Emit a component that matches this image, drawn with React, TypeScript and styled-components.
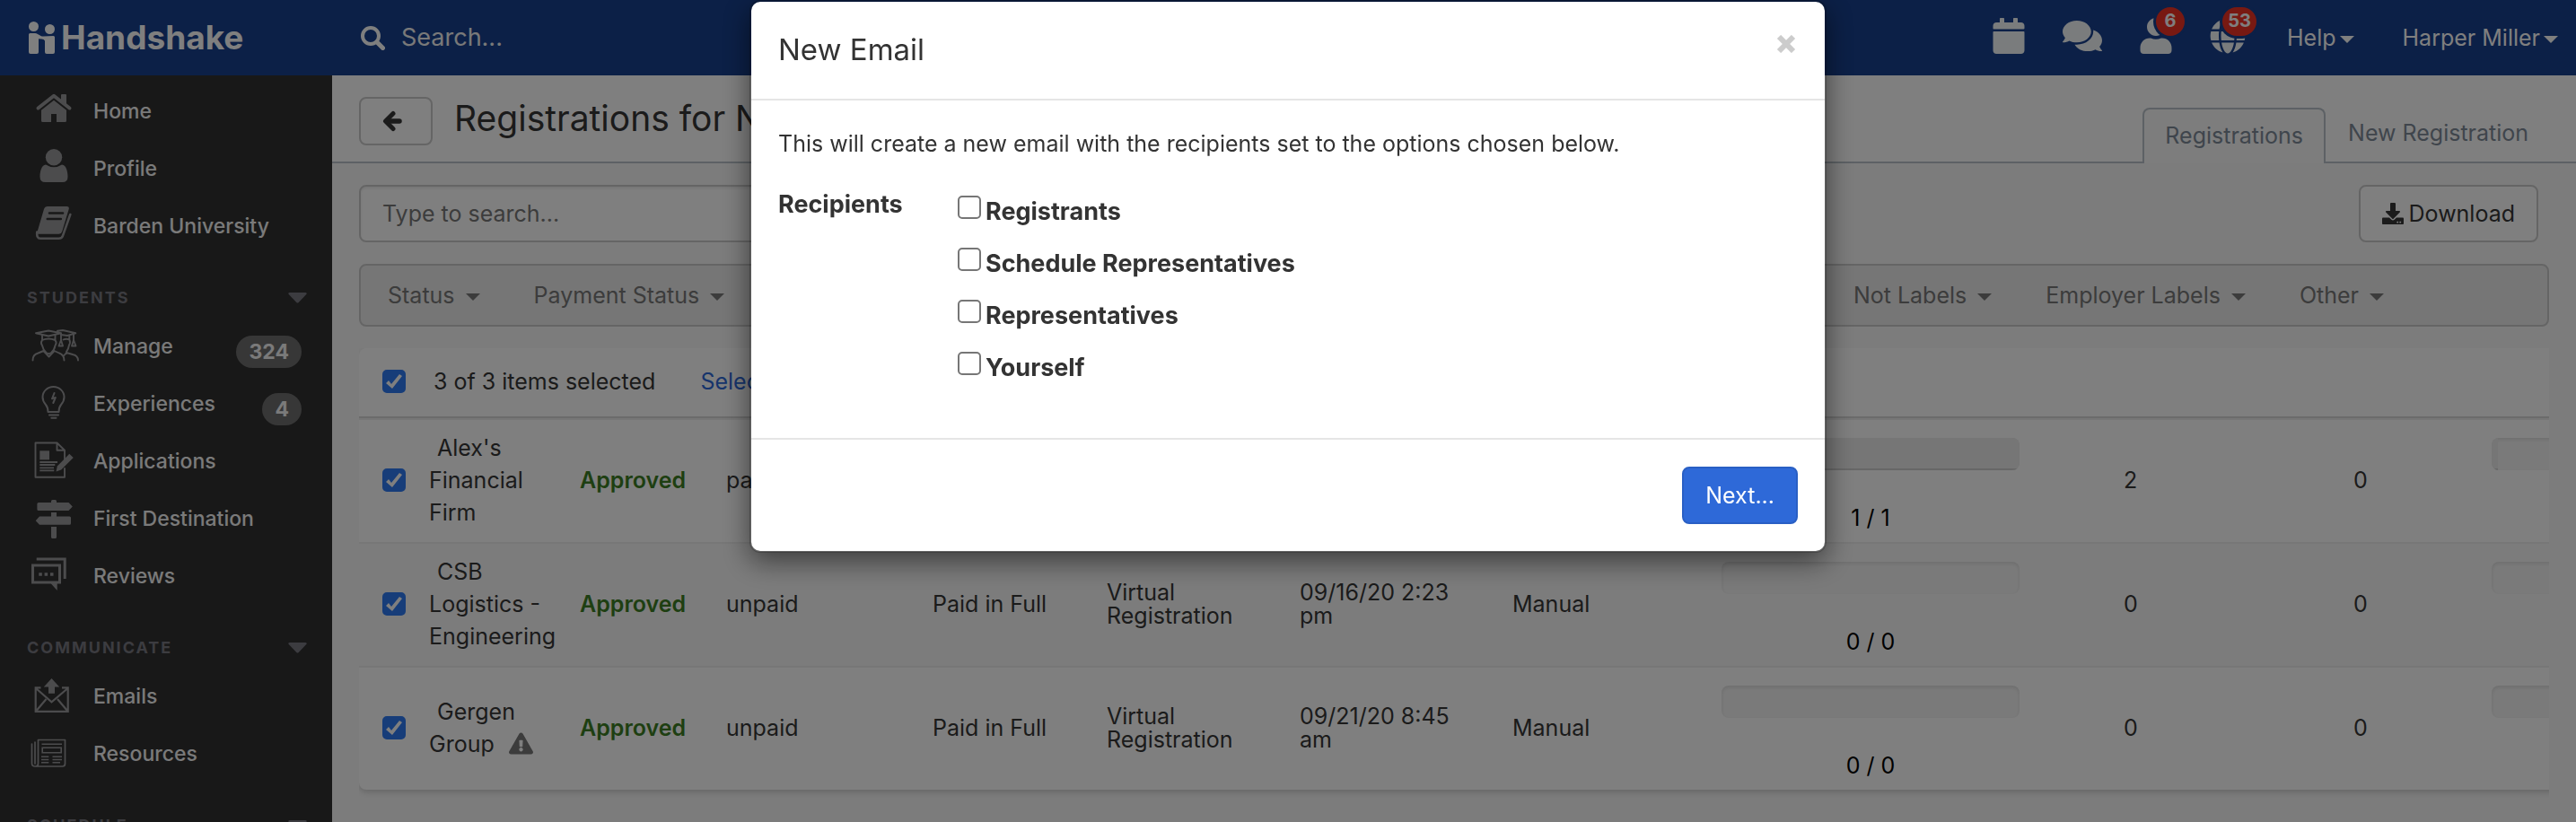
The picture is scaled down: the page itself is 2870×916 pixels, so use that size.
import React from 'react';
import styled, { createGlobalStyle, css } from 'styled-components';
import { FaCalendar, FaComments, FaDownload, FaExclamationTriangle, FaGlobe, FaUser } from 'react-icons/fa';

const colors = {
  navy: '#18408e',
  rail: '#303030',
  railText: '#f4f4f4',
  railIcon: '#98989b',
  railHeading: '#787881',
  text: '#363636',
  muted: '#787878',
  border: '#cbcbcb',
  rule: '#bac3ca',
  tab: '#7e8b99',
  blue: '#2e69d8',
  green: '#3c7e24',
  red: '#f03224',
};

const Global = createGlobalStyle`
  *, *::before, *::after { box-sizing: border-box; }
  body {
    margin: 0;
    overflow: hidden;
    font-family: Inter, "Liberation Sans", sans-serif;
    font-size: 25px;
    line-height: 36px;
    color: ${colors.text};
  }
  button, input { font: inherit; color: inherit; margin: 0; }
  button { cursor: pointer; }
  a { text-decoration: none; color: inherit; }
`;

/* ---------- shell ---------- */

const Shell = styled.div`
  display: flex;
  flex-direction: column;
  height: 100vh;
  overflow: hidden;
`;

const Body = styled.div`
  display: flex;
  flex: 1;
  min-height: 0;
`;

const Main = styled.main`
  flex: 1;
  min-width: 0;
  background: #f8f8f8;
`;

/* ---------- top bar ---------- */

const TopBar = styled.header`
  display: flex;
  align-items: center;
  flex: none;
  height: 84px;
  padding: 0 20px 0 32px;
  background: ${colors.navy};
  color: #fff;
`;

const Brand = styled.a`
  display: flex;
  align-items: center;
  gap: 6px;
  width: 370px;
  font-size: 37px;
  font-weight: 700;
  line-height: 48px;
`;

const BrandMark = styled.svg`
  width: 30px;
  height: 36px;
`;

const GlobalSearch = styled.label`
  display: flex;
  align-items: center;
  flex: 1;
  gap: 18px;
`;

const GlobalSearchInput = styled.input`
  flex: 1;
  min-width: 0;
  border: 0;
  padding: 0;
  background: transparent;
  font-size: 27px;
  &::placeholder { color: #f2f2f2; opacity: 1; }
`;

const TopActions = styled.nav`
  display: flex;
  align-items: center;
`;

const TopIcons = styled.div`
  display: flex;
  align-items: center;
  gap: 40px;
  margin-right: 46px;
  padding-bottom: 4px;
`;

const IconButton = styled.button`
  position: relative;
  display: flex;
  align-items: center;
  justify-content: center;
  height: 44px;
  padding: 0;
  border: 0;
  background: none;
  color: #f4f8fa;
`;

const Counter = styled.span`
  position: absolute;
  top: -10px;
  right: -12px;
  min-width: 32px;
  height: 32px;
  padding: 0 6px;
  border-radius: 16px;
  background: ${colors.red};
  box-shadow: 0 0 0 3px ${colors.navy};
  color: #fff;
  font-size: 20px;
  font-weight: 700;
  line-height: 30px;
  text-align: center;
`;

const TopMenus = styled.div`
  display: flex;
  gap: 54px;
`;

const TopMenu = styled.button`
  display: flex;
  align-items: center;
  gap: 4px;
  padding: 0;
  border: 0;
  background: none;
  color: #fff;
`;

const Caret = styled.span`
  border: 8px solid transparent;
  border-top-color: currentColor;
  border-bottom: 0;
  margin-top: 4px;
`;

/* ---------- side bar ---------- */

const Sidebar = styled.nav`
  flex: none;
  width: 370px;
  padding-top: 8px;
  overflow: hidden;
  background: ${colors.rail};
  color: ${colors.railText};
`;

const NavLink = styled.a`
  display: flex;
  align-items: center;
  gap: 16px;
  height: 64px;
  padding: 0 34px 0 32px;
  font-size: 23px;
  font-weight: 500;
`;

const NavIcon = styled.svg`
  flex: none;
  width: 56px;
  height: 48px;
  color: ${colors.railIcon};
  fill: none;
  stroke: none;
`;

const NavBadge = styled.span`
  margin: 12px 0 0 auto;
  padding: 0 14px;
  border-radius: 18px;
  background: #6e6e6e;
  font-weight: 700;
`;

const NavHeading = styled.button`
  display: flex;
  align-items: center;
  justify-content: space-between;
  width: 100%;
  height: 70px;
  padding: 26px 28px 0 30px;
  border: 0;
  background: none;
  color: ${colors.railHeading};
  font-size: 18px;
  font-weight: 700;
  letter-spacing: 2px;
  text-transform: uppercase;
`;

/* ---------- page header ---------- */

const PageHeader = styled.div`
  display: flex;
  align-items: flex-end;
  justify-content: space-between;
  height: 98px;
  padding: 0 28px 0 30px;
  border-bottom: 2px solid ${colors.rule};
  background: #fff;
`;

const TitleGroup = styled.div`
  display: flex;
  align-items: flex-start;
  gap: 24px;
  height: 72px;
`;

const outlined = css`
  border: 2px solid ${colors.border};
  border-radius: 8px;
  background: #fff;
`;

const BackButton = styled.button`
  ${outlined}
  display: flex;
  align-items: center;
  justify-content: center;
  width: 82px;
  height: 54px;
  padding: 0 8px 0 0;
`;

const Title = styled.h1`
  margin: 0;
  font-size: 39px;
  font-weight: 400;
  line-height: 48px;
`;

const Tabs = styled.div`
  display: flex;
  align-items: flex-end;
`;

const Tab = styled.a<{ $active?: boolean }>`
  height: ${(p) => (p.$active ? 62 : 60)}px;
  margin-bottom: ${(p) => (p.$active ? -2 : 0)}px;
  padding: ${(p) => (p.$active ? '11px 23px' : '8px 23px')};
  border: 2px solid ${(p) => (p.$active ? colors.rule : 'transparent')};
  border-bottom: 0;
  border-radius: 8px 8px 0 0;
  background: ${(p) => (p.$active ? '#fafafa' : 'transparent')};
  color: ${colors.tab};
`;

/* ---------- toolbar ---------- */

const Content = styled.div`
  display: flex;
  flex-direction: column;
  gap: 24px;
  padding: 24px 30px;
`;

const Toolbar = styled.div`
  display: flex;
  justify-content: space-between;
  padding-right: 12px;
`;

const SearchBox = styled.input`
  ${outlined}
  width: 50%;
  height: 64px;
  padding: 0 24px;
  box-shadow: inset 0 2px 3px rgba(0, 0, 0, 0.08);
  &::placeholder { color: ${colors.muted}; opacity: 1; }
`;

const DownloadButton = styled.button`
  ${outlined}
  display: flex;
  align-items: center;
  gap: 6px;
  height: 64px;
  padding: 0 24px;
`;

const FilterBar = styled.div`
  display: flex;
  justify-content: space-between;
  height: 70px;
  padding: 0 182px 0 30px;
  border: 2px solid ${colors.border};
  border-radius: 8px;
  background: #ececec;
`;

const FilterGroup = styled.div`
  display: flex;
  gap: 60px;
`;

const Filter = styled.button`
  display: flex;
  align-items: center;
  gap: 12px;
  padding: 0;
  border: 0;
  background: none;
  color: ${colors.muted};
`;

/* ---------- table ---------- */

const TableScroll = styled.div`
  padding-bottom: 16px;
  overflow-x: auto;
  overflow-y: hidden;
  scrollbar-width: none;
`;

const Table = styled.table`
  width: 2824px;
  table-layout: fixed;
  border-collapse: separate;
  border-spacing: 0;
  border-radius: 8px;
  background: #fff;
  box-shadow: 0 3px 6px rgba(0, 0, 0, 0.16);
`;

const Col = styled.col<{ $w: number }>`
  width: ${(p) => p.$w}px;
`;

const HeadCell = styled.th`
  height: 78px;
  padding: 0 0 2px 5px;
  border-bottom: 2px solid #d6d6d6;
  font-weight: 400;
  text-align: left;
`;

const Row = styled.tr<{ $shade: boolean }>`
  background: ${(p) => (p.$shade ? '#f9f9f9' : 'transparent')};
`;

const Cell = styled.td<{ $pad?: number }>`
  height: 138px;
  padding: 0 ${(p) => p.$pad ?? 22}px 2px 0;
  border-top: 2px solid #efefef;
  line-height: 26px;
  vertical-align: middle;
`;

const checkCell = css`
  padding: 0 0 2px 26px;
`;
const HeadCheckCell = styled(HeadCell)`${checkCell}`;
const CheckCell = styled(Cell)`${checkCell}`;

const MeterCell = styled(Cell)`
  padding: 20px 116px 0 0;
  vertical-align: top;
`;

const Company = styled.a`
  display: block;
  line-height: 36px;
  text-indent: 9px;
`;

const WarnIcon = styled(FaExclamationTriangle)`
  margin-left: 16px;
  color: ${colors.muted};
  vertical-align: -4px;
`;

const Approved = styled.strong`
  color: ${colors.green};
  font-weight: 600;
`;

const SelectLink = styled.a`
  margin-left: 50px;
  color: ${colors.blue};
`;

const Meter = styled.div`
  height: 36px;
  margin-bottom: 40px;
  overflow: hidden;
  border-radius: 8px;
  background: #f5f5f5;
  box-shadow: inset 0 2px 4px rgba(0, 0, 0, 0.1);
`;

const MeterFill = styled.div`
  height: 100%;
  background: #ececec;
  box-shadow: inset 0 -2px 0 #cfcfcf;
`;

const MeterText = styled.div`
  color: #000;
  text-align: center;
`;

const Check = styled.input.attrs({ type: 'checkbox' })`
  appearance: none;
  display: block;
  position: relative;
  flex: none;
  width: 26px;
  height: 26px;
  border: 2px solid #767676;
  border-radius: 5px;
  background: #fff;
  &:checked {
    border-color: #2e7af2;
    background: #2e7af2;
  }
  &:checked::after {
    content: '';
    position: absolute;
    inset: -2px;
    background: #fff;
    clip-path: polygon(4px 15px, 7px 12px, 10px 16px, 19px 5px, 22px 7px, 11px 21px);
  }
`;

/* ---------- dialog ---------- */

const Backdrop = styled.div`
  position: fixed;
  inset: 0;
  background: rgba(0, 0, 0, 0.5);
`;

const Dialog = styled.section`
  width: 1200px;
  max-width: 100%;
  margin: 0 auto;
  border: 2px solid rgba(0, 0, 0, 0.2);
  border-radius: 12px;
  background: #fff;
  background-clip: padding-box;
  box-shadow: 0 10px 30px rgba(0, 0, 0, 0.5);
  color: #333;
`;

const DialogHeader = styled.div`
  display: flex;
  align-items: center;
  justify-content: space-between;
  height: 110px;
  padding: 0 32px 2px 30px;
  border-bottom: 2px solid #e5e5e5;
`;

const DialogTitle = styled.h2`
  margin: 0;
  font-size: 33px;
  font-weight: 400;
`;

const CloseButton = styled.button`
  display: flex;
  padding: 0 0 12px;
  border: 0;
  background: none;
  color: #ccc;
`;

const DialogBody = styled.div`
  padding: 30px;
  height: 376px;
`;

const Intro = styled.p`
  margin: 0 0 32px;
`;

const Recipients = styled.div`
  display: grid;
  grid-template-columns: 200px 1fr;
  font-size: 27px;
  font-weight: 700;
`;

const Options = styled.div`
  display: flex;
  flex-direction: column;
  gap: 22px;
  padding-top: 8px;
`;

const Option = styled.label`
  display: flex;
  gap: 5px;
`;

const DialogFooter = styled.div`
  display: flex;
  justify-content: flex-end;
  padding: 30px;
  border-top: 2px solid #e5e5e5;
`;

const PrimaryButton = styled.button`
  height: 64px;
  padding: 0 24px;
  border: 2px solid #295fc4;
  border-radius: 8px;
  background: ${colors.blue};
  color: #fff;
`;

/* ---------- icons ---------- */

const line = { stroke: 'currentColor', strokeLinecap: 'round', strokeLinejoin: 'round' } as const;
const solid = { fill: 'currentColor' };

const icons: Record<string, React.ReactNode> = {
  home: (
    <>
      <path {...line} strokeWidth="4" d="M10.5 20.5 28 6.8l17.500 13.700" />
      <path {...solid} d="M36 6q0-1 1-1h4q1 0 1 1v12l-6-5z" />
      <path {...solid} d="M28 11.800 42 22.800V34.500q0 1.500-1.500 1.500H31V27h-6v9h-9.500q-1.500 0-1.500-1.500V22.800z" />
    </>
  ),
  profile: (
    <>
      <circle {...solid} cx="28" cy="11.300" r="9.200" />
      <path {...solid} d="M19 19.500q9 5.500 18 0c5 .5 6.500 8 6.500 13.500q0 6-6 6h-19q-6 0-6-6c0-5.500 1.500-13 6.500-13.500z" />
    </>
  ),
  book: (
    <>
      <path {...solid} d="M21 2h21.500q3 0 2.200 3l-7.500 25q-.8 2.700-3.500 2.700H10.500q-1.500 0-1-2.200L17 5q1-3 4-3z" />
      <path {...line} strokeWidth="2.600" d="M9.300 30.500q-.8 7.300 3.700 7.300h20.500q3.500 0 4.500-3.200L46.300 11" />
      <path stroke={colors.rail} strokeWidth="2.600" strokeLinecap="round" d="M23 9.500h15M20.800 16h15" />
    </>
  ),
  manage: (
    <g {...line} strokeWidth="1.900">
      <path d="M8 9.300 22 6.500l14 2.800-14 3.200zM32 6.800l6-.8 14.300 3.300L43 12l-7-1" />
      <path d="M15 11.500V17q7-3 14.500 0v-5.500M15 17q-2.200 3 0 6 1 5 4.500 8 2.800 2.200 5.600 0 3.500-3 4.400-8 2.200-3 0-6" />
      <path d="M36 10v7l-2.500 6.500h4.500L36 17M50 10v7l-2 6.500h4.500L50 17M38.500 16.500q3.500-1.500 6.800 0V12M45.300 16.500q1.500 3-.3 6-.8 5-3 7.500V32" />
      <path d="M4.500 39.500q0-6.500 6-8l6-2.500 6 6.500 6-6.500 5.500 2.500q5.500 2 5.500 8M42 31l-2.500 3M42 31l7 2q6 1.500 6 6.500" />
    </g>
  ),
  bulb: (
    <>
      <path {...line} strokeWidth="2" d="M21.500 33q0-5-2.500-8-3.500-4-3.500-8.500a12 11.500 0 0 1 24 0q0 4.500-3.500 8.500-2.500 3-2.500 8z" />
      <path {...line} strokeWidth="2" d="M23 36.500h10M25.300 39.700h5.200M28.500 12 26 18.300l3.800-1.300-2.500 6" />
    </>
  ),
  application: (
    <>
      <path {...line} strokeWidth="1.900" d="M40 24V11.700L31.500 3.500H7.500v38.300h32.500V32M31.500 3.500v8.200H40" />
      <path {...solid} d="M12.300 12.300H23v10H12.300z" />
      <path stroke="currentColor" strokeWidth="1.800" d="M12.300 25H32M12.300 28h17M12.300 31.300H28M12.300 34.300h16" />
      <path {...solid} d="m45.300 15.800 4.400 4.200-13.500 13.500-5.700 2 1.300-6z" />
    </>
  ),
  signs: (
    <path {...solid} d="M25 6V4.500Q25 3 26.500 3h3Q31 3 31 4.500V6h13.500l4.300 4.500-4.300 4.500H11q-1.600 0-1.600-1.600V7.600Q9.400 6 11 6zM25 17h6v4.500h14.500q1.500 0 1.500 1.500v6.200q0 1.500-1.500 1.500H12L7.700 26.200 12 21.500h13zM25 33h6v11.500q0 1.500-1.500 1.500h-3Q25 46 25 44.500z" />
  ),
  reviews: (
    <>
      <path stroke="currentColor" strokeWidth="3" d="M8.700 5h31.500v22M4.500 12h30v19h-30z" />
      <path {...solid} d="M24.500 32h7.200v8zM11.300 20.200h3.500v3.500h-3.500zM17.600 20.200h3.500v3.500h-3.500zM24 20.200h3.500v3.500H24z" />
    </>
  ),
  emails: (
    <>
      <path stroke="currentColor" strokeWidth="2.200" d="M13.500 14.300H7.700v26.500h36V14.300H37M8 15l17.500 15.300L43.500 15M8.500 40l11-13M43 40 32 27" />
      <path {...solid} d="m25.500 4 8.700 9.500H29v7.200h-7v-7.200h-5.200z" />
    </>
  ),
  resources: (
    <>
      <path {...line} strokeWidth="1.700" d="M10.500 8.500h30V35q0 3-3 3H7q-3.500 0-3.500-3.500V13M10.500 8.500V35q0 3-3 3M7 11v24" />
      <path stroke="currentColor" strokeWidth="1.600" d="M14.500 13.200h22.500M15.200 17.300h21v5.500h-21zM14 27.200h8.300M26.500 27.200H37M14 30.500h8.300M26.500 30.500H37M14 33.800h8.300M26.500 33.800H35" />
    </>
  ),
};

const Glyph = ({ name }: { name: string }) => (
  <NavIcon viewBox="0 0 56 48" aria-hidden="true">{icons[name]}</NavIcon>
);

const SectionCaret = () => (
  <svg width="21" height="12" viewBox="0 0 21 12" aria-hidden="true">
    <path fill="currentColor" d="M1.500 0h18q2 .6.8 2l-8.600 9q-1.200 1.200-2.400 0L.7 2Q-.5.600 1.500 0z" />
  </svg>
);

/* ---------- data ---------- */

type NavItem = { label: string; icon: string; badge?: string };
const sections: { heading?: string; items: NavItem[] }[] = [
  {
    items: [
      { label: 'Home', icon: 'home' },
      { label: 'Profile', icon: 'profile' },
      { label: 'Barden University', icon: 'book' },
    ],
  },
  {
    heading: 'Students',
    items: [
      { label: 'Manage', icon: 'manage', badge: '324' },
      { label: 'Experiences', icon: 'bulb', badge: '4' },
      { label: 'Applications', icon: 'application' },
      { label: 'First Destination', icon: 'signs' },
      { label: 'Reviews', icon: 'reviews' },
    ],
  },
  {
    heading: 'Communicate',
    items: [
      { label: 'Emails', icon: 'emails' },
      { label: 'Resources', icon: 'resources' },
    ],
  },
  { heading: 'Schedule', items: [] },
];

const columns = [78, 168, 163, 230, 194, 215, 237, 233, 448, 256, 154, 448];

const rows = [
  { company: "Alex's Financial Firm", paid: 'paid', date: '', used: 1, total: 1, reps: 2, extra: 0, share: 2 },
  { company: 'CSB Logistics - Engineering', paid: 'unpaid', date: '09/16/20 2:23 pm', used: 0, total: 0, reps: 0, extra: 0, share: 0 },
  { company: 'Gergen Group', warn: true, paid: 'unpaid', date: '09/21/20 8:45 am', used: 0, total: 0, reps: 0, extra: 0, share: 0 },
];

const recipients = ['Registrants', 'Schedule Representatives', 'Representatives', 'Yourself'];

const FilterMenu = ({ label }: { label: string }) => (
  <Filter type="button">{label}<Caret /></Filter>
);

export default function App() {
  return (
    <>
      <Global />
      <Shell>
        <TopBar>
          <Brand href="#">
            <BrandMark viewBox="0 0 30 36" fill="currentColor" aria-hidden="true">
              <circle cx="5.500" cy="5.500" r="5.500" />
              <circle cx="23.500" cy="8.500" r="5.500" />
              <path d="M0 14.500Q0 13 1.500 13H7q1.500 0 3 1l4 2.200q1 .5 2.500.4l11-.6q1.500 0 1.500 1.500V34q0 2-2 2h-7q-2 0-2-2V21.500q-1-2-3.500-2L11 19.300V34q0 2-2 2H2q-2 0-2-2z" />
            </BrandMark>
            Handshake
          </Brand>
          <GlobalSearch>
            <svg width="27" height="27" viewBox="0 0 27 27" fill="none" stroke="currentColor" aria-hidden="true">
              <circle cx="11" cy="11" r="9" strokeWidth="4" />
              <path d="m18 18 6.500 6.500" strokeWidth="5" strokeLinecap="round" />
            </svg>
            <GlobalSearchInput placeholder="Search..." aria-label="Search" />
          </GlobalSearch>
          <TopActions>
            <TopIcons>
              <IconButton aria-label="Calendar"><FaCalendar size={40} /></IconButton>
              <IconButton aria-label="Messages"><FaComments size={44} /></IconButton>
              <IconButton aria-label="Followers"><FaUser size={40} /><Counter>6</Counter></IconButton>
              <IconButton aria-label="Notifications"><FaGlobe size={40} /><Counter>53</Counter></IconButton>
            </TopIcons>
            <TopMenus>
              <TopMenu type="button">Help<Caret /></TopMenu>
              <TopMenu type="button">Harper Miller<Caret /></TopMenu>
            </TopMenus>
          </TopActions>
        </TopBar>
        <Body>
          <Sidebar>
            {sections.map((section, i) => (
              <React.Fragment key={i}>
                {section.heading && (
                  <NavHeading type="button">{section.heading}<SectionCaret /></NavHeading>
                )}
                {section.items.map((item) => (
                  <NavLink href="#" key={item.label}>
                    <Glyph name={item.icon} />
                    {item.label}
                    {item.badge && <NavBadge>{item.badge}</NavBadge>}
                  </NavLink>
                ))}
              </React.Fragment>
            ))}
          </Sidebar>
          <Main>
            <PageHeader>
              <TitleGroup>
                <BackButton type="button" aria-label="Back">
                  <svg width="22" height="24" viewBox="0 0 22 24" fill="none" stroke="currentColor" aria-hidden="true">
                    <path d="M12 3.500 3.500 12l8.500 8.500" strokeWidth="5" strokeLinecap="round" strokeLinejoin="round" />
                    <path d="M5 12h14" strokeWidth="5.500" strokeLinecap="round" />
                  </svg>
                </BackButton>
                <Title>Registrations for N</Title>
              </TitleGroup>
              <Tabs>
                <Tab href="#" $active>Registrations</Tab>
                <Tab href="#">New Registration</Tab>
              </Tabs>
            </PageHeader>
            <Content>
              <Toolbar>
                <SearchBox placeholder="Type to search..." aria-label="Search registrations" />
                <DownloadButton type="button"><FaDownload size={24} />Download</DownloadButton>
              </Toolbar>
              <FilterBar>
                <FilterGroup>
                  <FilterMenu label="Status" />
                  <FilterMenu label="Payment Status" />
                </FilterGroup>
                <FilterGroup>
                  <FilterMenu label="Not Labels" />
                  <FilterMenu label="Employer Labels" />
                  <FilterMenu label="Other" />
                </FilterGroup>
              </FilterBar>
              <TableScroll>
                <Table>
                  <colgroup>{columns.map((w, i) => <Col key={i} $w={w} />)}</colgroup>
                  <thead>
                    <tr>
                      <HeadCheckCell><Check defaultChecked aria-label="Select all rows" /></HeadCheckCell>
                      <HeadCell colSpan={11}>
                        3 of 3 items selected
                        <SelectLink href="#">Select</SelectLink>
                      </HeadCell>
                    </tr>
                  </thead>
                  <tbody>
                    {rows.map((r, i) => (
                      <Row key={r.company} $shade={i % 2 === 1}>
                        <CheckCell><Check defaultChecked aria-label={r.company} /></CheckCell>
                        <Cell>
                          <Company href="#">{r.company}{r.warn && <WarnIcon size={27} />}</Company>
                        </Cell>
                        <Cell><Approved>Approved</Approved></Cell>
                        <Cell>{r.paid}</Cell>
                        <Cell>{r.date && 'Paid in Full'}</Cell>
                        <Cell>{r.date && 'Virtual Registration'}</Cell>
                        <Cell $pad={40}>{r.date}</Cell>
                        <Cell>{r.date && 'Manual'}</Cell>
                        <MeterCell>
                          <Meter>{r.used > 0 && <MeterFill />}</Meter>
                          <MeterText>{r.used} / {r.total}</MeterText>
                        </MeterCell>
                        <Cell>{r.reps}</Cell>
                        <Cell>{r.extra}</Cell>
                        <MeterCell>
                          <Meter>{r.share > 0 && <MeterFill style={{ width: `${r.share}%` }} />}</Meter>
                        </MeterCell>
                      </Row>
                    ))}
                  </tbody>
                </Table>
              </TableScroll>
            </Content>
          </Main>
        </Body>
      </Shell>
      <Backdrop>
        <Dialog role="dialog" aria-modal="true" aria-labelledby="dialog-title">
          <DialogHeader>
            <DialogTitle id="dialog-title">New Email</DialogTitle>
            <CloseButton type="button" aria-label="Close">
              <svg width="22" height="20" viewBox="0 0 22 20" stroke="currentColor" strokeWidth="6" aria-hidden="true">
                <path d="m3 2 16 16M19 2 3 18" />
              </svg>
            </CloseButton>
          </DialogHeader>
          <DialogBody>
            <Intro>This will create a new email with the recipients set to the options chosen below.</Intro>
            <Recipients role="group" aria-labelledby="recipients-label">
              <span id="recipients-label">Recipients</span>
              <Options>
                {recipients.map((name) => (
                  <Option key={name}><Check />{name}</Option>
                ))}
              </Options>
            </Recipients>
          </DialogBody>
          <DialogFooter>
            <PrimaryButton type="button">Next...</PrimaryButton>
          </DialogFooter>
        </Dialog>
      </Backdrop>
    </>
  );
}
